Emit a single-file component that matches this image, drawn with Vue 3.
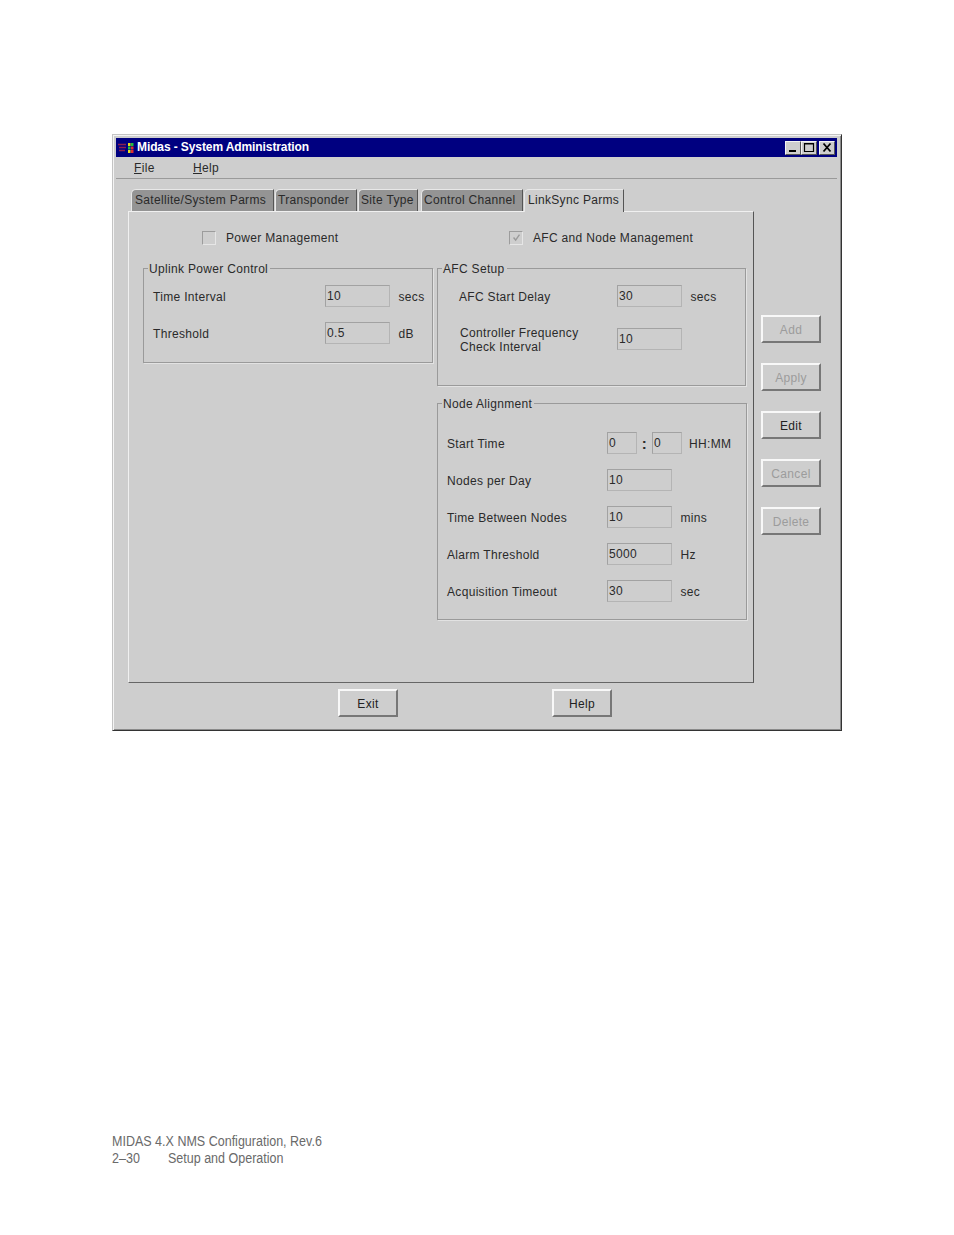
<template>
  <div class="page">
    <div class="window">
      <div class="titlebar">
        <svg class="app-icon" viewBox="0 0 16 12" width="16" height="12">
          <rect width="16" height="12" fill="#000080" />
          <path d="M0 2.5h8M1 5.5h7M1 8.5h6" stroke="#8a2050" stroke-width="1.6" />
          <rect x="10" y="1" width="2.5" height="3" fill="#e8e020" />
          <rect x="13" y="1" width="2.5" height="3" fill="#20c040" />
          <rect x="10" y="4.500" width="2.5" height="3" fill="#20c040" />
          <rect x="13" y="4.500" width="2.5" height="3" fill="#e03030" />
          <rect x="10" y="8" width="2.5" height="3" fill="#e8e020" />
          <rect x="13" y="8" width="2.5" height="3" fill="#e03030" />
        </svg>
        <span class="title-text">Midas - System Administration</span>
        <div class="win-buttons">
          <div class="win-btn">
            <svg viewBox="0 0 14 13" width="14" height="13"><path d="M3 10h7" stroke="#000" stroke-width="2" /></svg>
          </div>
          <div class="win-btn">
            <svg viewBox="0 0 14 13" width="14" height="13"><path d="M2.5 2.5h9v8h-9z M2 3h10" fill="none" stroke="#000" stroke-width="1.2" /></svg>
          </div>
          <div class="win-btn close">
            <svg viewBox="0 0 14 13" width="14" height="13"><path d="M3.5 2.5l7 8M10.5 2.5l-7 8" fill="none" stroke="#000" stroke-width="1.8" /></svg>
          </div>
        </div>
      </div>

      <div class="menubar">
        <span class="menu-item"><u>F</u>ile</span>
        <span class="menu-item"><u>H</u>elp</span>
      </div>

      <div class="body">
        <div class="main">
          <div class="tabs">
            <div
              v-for="tab in tabs"
              :key="tab.label"
              class="tab"
              :class="{ active: tab.active }"
              :style="{ width: tab.width + 'px', marginRight: tab.gap + 'px' }"
            >{{ tab.label }}</div>
          </div>

          <div class="panel">
            <div class="checks">
              <label class="check first">
                <span class="box"></span>
                Power Management
              </label>
              <label class="check second">
                <span class="box">
                  <svg viewBox="0 0 13 13" width="11" height="11"><path d="M3 6.500l2.500 3 4.500-6.500" fill="none" stroke="#999" stroke-width="1.6" /></svg>
                </span>
                AFC and Node Management
              </label>
            </div>

            <div class="columns">
              <div class="col-left">
                <div class="group uplink">
                  <span class="legend">Uplink Power Control</span>
                  <div v-for="row in uplinkRows" :key="row.label" class="row">
                    <span class="label">{{ row.label }}</span>
                    <span class="field">{{ row.value }}</span>
                    <span class="unit">{{ row.unit }}</span>
                  </div>
                </div>
              </div>

              <div class="col-right">
                <div class="group afc">
                  <span class="legend">AFC Setup</span>
                  <div class="row">
                    <span class="label">AFC Start Delay</span>
                    <span class="field">30</span>
                    <span class="unit">secs</span>
                  </div>
                  <div class="row two-line">
                    <span class="label">Controller Frequency<br />Check Interval</span>
                    <span class="field">10</span>
                  </div>
                </div>

                <div class="group node">
                  <span class="legend">Node Alignment</span>
                  <div class="row">
                    <span class="label">Start Time</span>
                    <span class="field small">0</span>
                    <span class="colon">:</span>
                    <span class="field small">0</span>
                    <span class="unit hhmm">HH:MM</span>
                  </div>
                  <div v-for="row in nodeRows" :key="row.label" class="row">
                    <span class="label">{{ row.label }}</span>
                    <span class="field">{{ row.value }}</span>
                    <span class="unit">{{ row.unit }}</span>
                  </div>
                </div>
              </div>
            </div>
          </div>

          <div class="bottom-buttons">
            <button class="btn">Exit</button>
            <button class="btn">Help</button>
          </div>
        </div>

        <div class="side-buttons">
          <button
            v-for="b in sideButtons"
            :key="b.label"
            class="btn"
            :class="{ disabled: !b.enabled }"
          >{{ b.label }}</button>
        </div>
      </div>
    </div>

    <div class="footer">
      <div>MIDAS 4.X NMS Configuration, Rev.6</div>
      <div class="footer-second"><span class="page-no">2–30</span><span>Setup and Operation</span></div>
    </div>
  </div>
</template>

<script setup>
const tabs = [
  { label: 'Satellite/System Parms', width: 143, gap: 1 },
  { label: 'Transponder', width: 82, gap: 1 },
  { label: 'Site Type', width: 60, gap: 3 },
  { label: 'Control Channel', width: 102, gap: 1 },
  { label: 'LinkSync Parms', width: 100, gap: 0, active: true }
]

const uplinkRows = [
  { label: 'Time Interval', value: '10', unit: 'secs' },
  { label: 'Threshold', value: '0.5', unit: 'dB' }
]

const nodeRows = [
  { label: 'Nodes per Day', value: '10', unit: '' },
  { label: 'Time Between Nodes', value: '10', unit: 'mins' },
  { label: 'Alarm Threshold', value: '5000', unit: 'Hz' },
  { label: 'Acquisition Timeout', value: '30', unit: 'sec' }
]

const sideButtons = [
  { label: 'Add', enabled: false },
  { label: 'Apply', enabled: false },
  { label: 'Edit', enabled: true },
  { label: 'Cancel', enabled: false },
  { label: 'Delete', enabled: false }
]
</script>

<style>
html, body {
  background: #fff;
}
</style>

<style scoped>
.page {
  width: 954px;
  height: 1235px;
  padding: 134px 0 0 112px;
  box-sizing: border-box;
  font-family: "Liberation Sans", Arial, sans-serif;
  font-size: 12px;
  letter-spacing: 0.32px;
  color: #2a2a2a;
}

.window {
  width: 730px;
  height: 597px;
  box-sizing: border-box;
  background: #cecece;
  border: 1px solid;
  border-color: #c4c4c4 #333 #333 #c4c4c4;
  box-shadow: inset 1px 1px 0 #f4f4f4, inset -1px -1px 0 #8a8a8a;
  padding: 3px 4px 0 3px;
}

.titlebar {
  height: 19px;
  background: #000080;
  display: flex;
  align-items: center;
  padding-left: 2px;
  color: #fff;
}

.app-icon {
  flex: none;
  margin-right: 3px;
}

.title-text {
  font-weight: bold;
  letter-spacing: -0.1px;
  margin-top: -1px;
}

.win-buttons {
  margin-left: auto;
  margin-right: 2px;
  display: flex;
}

.win-btn {
  width: 16px;
  height: 14px;
  box-sizing: border-box;
  background: #cecece;
  border: 1px solid;
  border-color: #f4f4f4 #555 #555 #f4f4f4;
  display: flex;
  align-items: center;
  justify-content: center;
}

.win-btn svg {
  flex: none;
}

.win-btn.close {
  margin-left: 2px;
}

.menubar {
  height: 22px;
  box-sizing: border-box;
  border-bottom: 1px solid #9a9a9a;
  display: flex;
  align-items: center;
  padding: 1px 0 0 18px;
}

.menu-item {
  width: 59px;
}

.body {
  display: flex;
  padding-left: 12px;
}

.main {
  width: 626px;
}

.tabs {
  display: flex;
  height: 22px;
  margin-top: 10px;
  padding-left: 3px;
  position: relative;
  z-index: 1;
}

.tab {
  box-sizing: border-box;
  height: 22px;
  flex: none;
  background: #949494;
  border: 1px solid;
  border-color: #e8e8e8 #555 transparent #e8e8e8;
  border-bottom: none;
  border-top-left-radius: 5px;
  padding: 3px 0 0 2px;
  white-space: nowrap;
}

.tab:first-child {
  padding-left: 3px;
}

.tab.active {
  background: #cecece;
  height: 23px;
  padding-left: 3px;
  position: relative;
}

.panel {
  height: 472px;
  box-sizing: border-box;
  border: 1px solid;
  border-color: #f0f0f0 #555 #666 #f0f0f0;
  padding: 18px 0 0 14px;
}

.checks {
  display: flex;
  height: 15px;
}

.check {
  display: flex;
  align-items: center;
  white-space: nowrap;
}

.check.first {
  margin-left: 59px;
  width: 307px;
}

.box {
  width: 14px;
  height: 14px;
  box-sizing: border-box;
  border: 1px solid #9c9c9c;
  border-right-color: #e6e6e6;
  border-bottom-color: #e6e6e6;
  margin-right: 10px;
  display: flex;
  align-items: center;
  justify-content: center;
  flex: none;
}

.columns {
  display: flex;
  margin-top: 23px;
}

.col-left {
  width: 290px;
  margin-right: 4px;
}

.col-right {
  width: 310px;
}

.group {
  position: relative;
  box-sizing: border-box;
  border: 1px solid #9a9a9a;
  box-shadow: 1px 1px 0 #e2e2e2;
}

.legend {
  position: absolute;
  top: -7px;
  left: 4px;
  background: #cecece;
  padding: 0 2px 0 1px;
  line-height: 14px;
  white-space: nowrap;
}

.row {
  display: flex;
  align-items: center;
  height: 22px;
  line-height: 14px;
}

.row > span {
  padding-top: 1px;
}

.field {
  width: 65px;
  height: 22px;
  box-sizing: border-box;
  flex: none;
  border: 1px solid #a2a2a2;
  border-right-color: #b4b4b4;
  border-bottom-color: #b4b4b4;
  padding-left: 1px;
  line-height: 20px;
}

.row > .field {
  padding-top: 0;
}

.field.small {
  width: 30px;
}

.colon {
  width: 15px;
  text-align: center;
  font-weight: bold;
  font-size: 15px;
}

.unit {
  margin-left: 8.500px;
  white-space: nowrap;
}

.hhmm {
  margin-left: 7px;
}

.label {
  white-space: nowrap;
}

.uplink {
  height: 95px;
  padding: 16px 0 0 9px;
}

.uplink .row + .row {
  margin-top: 15px;
}

.uplink .label {
  width: 172px;
}

.afc {
  width: 309px;
  height: 118px;
  padding: 16px 0 0 21px;
}

.afc .label {
  width: 158px;
}

.afc .two-line {
  margin-top: 21px;
}

.afc .two-line .label {
  margin-left: 1px;
  width: 157px;
}

.node {
  height: 217px;
  margin-top: 17px;
  padding: 28px 0 0 9px;
}

.node .row + .row {
  margin-top: 15px;
}

.node .label {
  width: 160px;
}

.side-buttons {
  display: flex;
  flex-direction: column;
  gap: 20px;
  padding: 136px 0 0 7px;
}

.btn {
  width: 60px;
  height: 28px;
  box-sizing: border-box;
  background: #cecece;
  font-family: inherit;
  font-size: 12px;
  letter-spacing: 0.32px;
  color: #222;
  padding: 1px 0 0;
  border: 2px solid;
  border-color: #f8f8f8 #777 #777 #f8f8f8;
}

.btn.disabled {
  color: #9c9c9c;
}

.bottom-buttons {
  display: flex;
  gap: 154px;
  margin-top: 6px;
  padding-left: 210px;
}

.footer {
  margin-top: 402px;
  font-size: 14px;
  line-height: 17px;
  letter-spacing: 0;
  color: #6a6a6a;
  transform: scaleX(0.894);
  transform-origin: left top;
  width: 300px;
}

.footer-second {
  display: flex;
}

.page-no {
  width: 62.6px;
}
</style>
